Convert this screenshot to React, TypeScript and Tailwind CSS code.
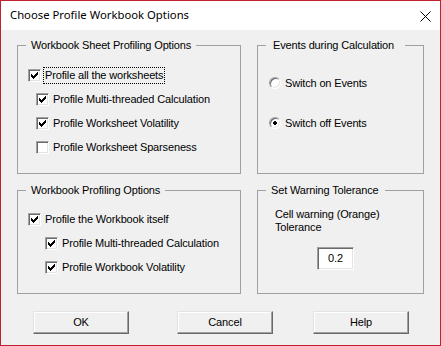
import type { ReactNode } from "react";

const body = "font-['Liberation_Sans',Arial,sans-serif] text-[11px] tracking-[-0.15px] text-black";

function CheckMark() {
  // classic 7x7 tick, drawn by pixel rows
  const rows: [number, number, number][] = [
    [6, 0, 1],
    [5, 1, 2],
    [0, 2, 1],
    [4, 2, 3],
    [0, 3, 2],
    [3, 3, 3],
    [0, 4, 5],
    [1, 5, 3],
    [2, 6, 1],
  ];
  return (
    <svg width="11" height="11" viewBox="0 0 11 11" shapeRendering="crispEdges">
      {rows.map(([x, y, w], i) => (
        <rect key={i} x={x + 2} y={y + 2} width={w} height={1} fill="#000" />
      ))}
    </svg>
  );
}

function Checkbox({ checked }: { checked?: boolean }) {
  return (
    <span className="flex h-[13px] w-[13px] shrink-0 border border-t-[#a0a0a0] border-l-[#a0a0a0] border-r-white border-b-white bg-white shadow-[inset_1px_1px_0_#696969,inset_-1px_-1px_0_#e3e3e3]">
      {checked && <CheckMark />}
    </span>
  );
}

function Radio({ checked }: { checked?: boolean }) {
  return (
    <span className="flex h-[12px] w-[12px] shrink-0 items-center justify-center rounded-full border border-t-[#a0a0a0] border-l-[#a0a0a0] border-r-white border-b-white bg-white shadow-[inset_1px_1px_0_#696969,inset_-1px_-1px_0_#e3e3e3]">
      {checked && (
        <svg width="4" height="4" viewBox="0 0 4 4" shapeRendering="crispEdges">
          <rect x="1" y="0" width="2" height="4" fill="#000" />
          <rect x="0" y="1" width="4" height="2" fill="#000" />
        </svg>
      )}
    </span>
  );
}

function CheckRow({ label, checked, indent, focused }: { label: string; checked?: boolean; indent: string; focused?: boolean }) {
  return (
    <div className={`flex h-[24px] items-center ${indent}`}>
      <Checkbox checked={checked} />
      {focused ? (
        <span className="ml-[2px] flex h-[17px] items-center border border-dotted border-black px-[1px]">{label}</span>
      ) : (
        <span className="ml-[4px]">{label}</span>
      )}
    </div>
  );
}

function RadioRow({ label, checked }: { label: string; checked?: boolean }) {
  return (
    <div className="flex h-[24px] items-center pl-[11px]">
      <Radio checked={checked} />
      <span className="ml-[4px]">{label}</span>
    </div>
  );
}

function Group({ title, titlePad, className, children }: { title: string; titlePad: string; className: string; children: ReactNode }) {
  return (
    <div className={`relative border border-[#a0a0a0] ${className}`}>
      <span className={`absolute -top-[7px] left-[8px] bg-[#f0f0f0] leading-[13px] ${titlePad}`}>{title}</span>
      {children}
    </div>
  );
}

function Button({ label, className }: { label: string; className: string }) {
  return (
    <button className={`h-[23px] w-[96px] border border-t-[#e3e3e3] border-l-[#e3e3e3] border-r-[#696969] border-b-[#696969] bg-[#f0f0f0] shadow-[inset_-1px_-1px_0_#a0a0a0,inset_1px_1px_0_#fff] ${className}`}>
      {label}
    </button>
  );
}

export default function App() {
  return (
    <div className="flex h-[346px] w-[441px] flex-col border border-[#c1202e] bg-white">
      {/* Title bar */}
      <div className="flex h-[29px] shrink-0 items-center justify-between bg-white pl-[9px] pr-[9px]">
        <span className="font-['Noto_Sans',sans-serif] text-[11.3px] text-black">Choose Profile Workbook Options</span>
        <svg width="11" height="11" viewBox="0 0 11 11" className="mt-[1px]">
          <path d="M0.5 0.5 L10.5 10.5 M10.5 0.5 L0.5 10.5" stroke="#000" strokeWidth="1" />
        </svg>
      </div>

      {/* Body */}
      <div className={`flex-1 bg-[#f0f0f0] px-[16px] pt-[15px] ${body}`}>
        <div className="flex gap-[16px]">
          <div className="flex w-[224px] flex-col gap-[16px]">
            <Group title="Workbook Sheet Profiling Options" titlePad="px-[5px]" className="h-[129px] pt-[17px]">
              <CheckRow label="Profile all the worksheets" checked indent="pl-[10px]" focused />
              <CheckRow label="Profile Multi-threaded Calculation" checked indent="pl-[18px]" />
              <CheckRow label="Profile Worksheet Volatility" checked indent="pl-[18px]" />
              <CheckRow label="Profile Worksheet Sparseness" indent="pl-[18px]" />
            </Group>
            <Group title="Workbook Profiling Options" titlePad="px-[5px]" className="h-[104px] pt-[16px]">
              <CheckRow label="Profile the Workbook itself" checked indent="pl-[10px]" />
              <CheckRow label="Profile Multi-threaded Calculation" checked indent="pl-[27px]" />
              <CheckRow label="Profile Workbook Volatility" checked indent="pl-[27px]" />
            </Group>
          </div>

          <div className="flex w-[167px] flex-col gap-[16px]">
            <Group title="Events during Calculation" titlePad="pl-[7px] pr-[11px]" className="flex h-[129px] flex-col gap-[16px] pt-[25px]">
              <RadioRow label="Switch on Events" />
              <RadioRow label="Switch off Events" checked />
            </Group>
            <Group title="Set Warning Tolerance" titlePad="pl-[5px] pr-[6px]" className="h-[104px] pt-[17px]">
              <div className="pl-[17px] leading-[13px]">
                <div>Cell warning (Orange)</div>
                <div>Tolerance</div>
              </div>
              <div className="ml-[59px] mt-[13px] flex h-[23px] w-[37px] items-center justify-center border border-t-[#a0a0a0] border-l-[#a0a0a0] border-r-white border-b-white bg-white shadow-[inset_1px_1px_0_#696969,inset_-1px_-1px_0_#e3e3e3]">
                0.2
              </div>
            </Group>
          </div>
        </div>

        {/* Buttons */}
        <div className="mt-[17px] flex">
          <Button label="OK" className="ml-[16px]" />
          <Button label="Cancel" className="ml-[48px]" />
          <Button label="Help" className="ml-[40px]" />
        </div>
      </div>
    </div>
  );
}
